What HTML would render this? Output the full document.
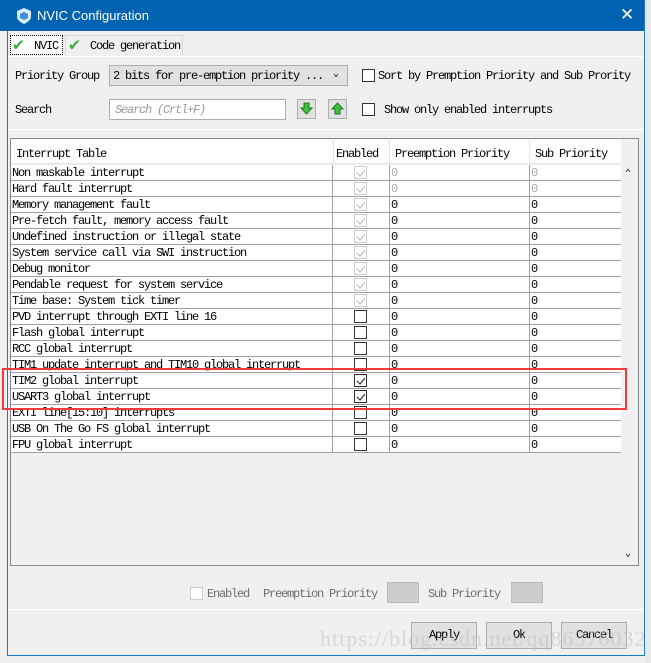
<!DOCTYPE html>
<html><head><meta charset="utf-8"><style>
*{margin:0;padding:0;box-sizing:border-box}
body{width:651px;height:663px;background:#f0f0f0;position:relative;overflow:hidden;font-family:"Liberation Mono",monospace;font-size:12px;letter-spacing:-1.2px;color:#000}
.a{position:absolute}
.win{left:7px;top:0;width:638px;height:656px;border:1px solid #1979ca;background:#f0f0f0}
.title{left:0;top:0;width:644px;height:31px;background:#0063b1;color:#fff;font-family:"Liberation Sans",sans-serif;font-size:13px;letter-spacing:0}
.cb{width:13px;height:13px;border:1px solid #333;background:#fff}
.row{left:11px;width:610px;height:16px;border-bottom:1px solid #a0a0a0;background:#fff}
.row span{position:absolute;top:1px;line-height:14px}
.vl{width:1px;background:#a0a0a0}
.btn{height:27px;border:1px solid #adadad;background:#e1e1e1;text-align:center;line-height:25px}
</style></head><body>
<div class="a" style="left:645px;top:0;width:6px;height:663px;background:#e8e8e8"></div>
<div class="a win"></div>
<div class="a title">
 <svg class="a" style="left:17px;top:8px" width="14" height="16" viewBox="0 0 14 16"><path d="M7 0L14 3V9C14 13 7 16 7 16C7 16 0 13 0 9V3Z" fill="#d8ecfa"/><path d="M7 4L11 6V10L7 12L3 10V6Z" fill="#3a8fd6"/></svg>
 <div class="a" style="left:37px;top:8px">NVIC Configuration</div>
 <div class="a" style="left:620px;top:5px;font-size:17px">✕</div>
</div>
<!-- tabs -->
<div class="a" style="left:10px;top:35px;width:53px;height:20px;border:1px dotted #000;background:#fff"></div>
<div class="a" style="left:13px;top:34px;color:#3cb043;font-size:18px;letter-spacing:0;font-weight:bold">✔</div>
<div class="a" style="left:34px;top:39px">NVIC</div>
<div class="a" style="left:65px;top:35px;width:118px;height:20px;border:1px solid #d9d9d9;border-bottom:none;background:#f0f0f0"></div>
<div class="a" style="left:69px;top:34px;color:#3cb043;font-size:18px;letter-spacing:0;font-weight:bold">✔</div>
<div class="a" style="left:90px;top:39px">Code generation</div>
<div class="a" style="left:8px;top:56px;width:636px;height:1px;background:#fff"></div>
<!-- controls -->
<div class="a" style="left:15px;top:69px">Priority Group</div>
<div class="a" style="left:109px;top:65px;width:239px;height:21px;border:1px solid #adadad;background:#e1e1e1"></div>
<div class="a" style="left:113px;top:69px">2 bits for pre-emption priority ...</div>
<div class="a" style="left:333px;top:68px;font-size:10px">&#8964;</div>
<div class="a cb" style="left:362px;top:69px"></div>
<div class="a" style="left:378px;top:69px">Sort by Premption Priority and Sub Prority</div>
<div class="a" style="left:15px;top:103px">Search</div>
<div class="a" style="left:109px;top:99px;width:177px;height:21px;border:1px solid #adadad;background:#fff"></div>
<div class="a" style="left:115px;top:103px;color:#999;font-style:italic">Search (Crtl+F)</div>
<div class="a" style="left:297px;top:99px;width:19px;height:20px;border:1px solid #adadad;background:#e1e1e1"></div>
<svg class="a" style="left:300px;top:102px" width="13" height="13"><path d="M4 1H9V6H12L6.5 12L1 6H4Z" fill="#3ec23e" stroke="#1a7a1a"/></svg>
<div class="a" style="left:328px;top:99px;width:19px;height:20px;border:1px solid #adadad;background:#e1e1e1"></div>
<svg class="a" style="left:331px;top:102px" width="13" height="13"><path d="M4 12H9V7H12L6.5 1L1 7H4Z" fill="#3ec23e" stroke="#1a7a1a"/></svg>
<div class="a cb" style="left:362px;top:103px"></div>
<div class="a" style="left:384px;top:103px">Show only enabled interrupts</div>
<!-- panel -->
<div class="a" style="left:8px;top:129px;width:636px;height:1px;background:#fff"></div>
<div class="a" style="left:10px;top:138px;width:629px;height:428px;border:1px solid #828790;background:#f0f0f0"></div>
<div class="a" style="left:11px;top:139px;width:610px;height:25px;background:#fff;border-bottom:1px solid #e5e5e5"></div>
<div class="a" style="left:16px;top:147px">Interrupt Table</div>
<div class="a" style="left:336px;top:147px">Enabled</div>
<div class="a" style="left:395px;top:147px">Preemption Priority</div>
<div class="a" style="left:535px;top:147px">Sub Priority</div>
<div class="a" style="left:621px;top:164px;width:17px;height:401px;background:#f0f0f0"></div>
<div class="a" style="left:625px;top:168px;font-size:10px">&#8963;</div>
<div class="a" style="left:625px;top:548px;font-size:10px">&#8964;</div>
<div id="rows"></div>
<!-- bottom controls -->
<div class="a" style="left:8px;top:609px;width:636px;height:1px;background:#fff"></div>
<div class="a" style="left:190px;top:587px;width:13px;height:13px;border:1px solid #ccc;background:#fff"></div>
<div class="a" style="left:207px;top:587px;color:#6d6d6d">Enabled</div>
<div class="a" style="left:263px;top:587px;color:#6d6d6d">Preemption Priority</div>
<div class="a" style="left:387px;top:582px;width:32px;height:21px;border:1px solid #bcbcbc;background:#ccc"></div>
<div class="a" style="left:428px;top:587px;color:#6d6d6d">Sub Priority</div>
<div class="a" style="left:511px;top:582px;width:32px;height:21px;border:1px solid #bcbcbc;background:#ccc"></div>
<div class="a btn" style="left:411px;top:622px;width:66px">Apply</div>
<div class="a btn" style="left:486px;top:622px;width:66px">Ok</div>
<div class="a btn" style="left:561px;top:622px;width:66px">Cancel</div>
<div class="a" style="left:320px;top:626px;font-size:22px;letter-spacing:1px;color:rgba(190,190,190,.5);font-family:'Liberation Serif',serif">https://blog.csdn.net/qq86376032</div>
<div class="a" style="left:2px;top:368px;width:625px;height:42px;border:2px solid #f03c3c"></div>
<script>
var r=["Non maskable interrupt","Hard fault interrupt","Memory management fault","Pre-fetch fault, memory access fault","Undefined instruction or illegal state","System service call via SWI instruction","Debug monitor","Pendable request for system service","Time base: System tick timer","PVD interrupt through EXTI line 16","Flash global interrupt","RCC global interrupt","TIM1 update interrupt and TIM10 global interrupt","TIM2 global interrupt","USART3 global interrupt","EXTI line[15:10] interrupts","USB On The Go FS global interrupt","FPU global interrupt"];
var h="";
r.forEach(function(t,i){var y=165+16*i;var g=i<9,c=g||i==13||i==14;
h+='<div class="a row" style="top:'+y+'px"><span style="left:1px">'+t+'</span><span style="left:380px;color:'+(i<2?'#aaa':'#000')+'">0</span><span style="left:520px;color:'+(i<2?'#aaa':'#000')+'">0</span>'+
'<div class="a" style="left:343px;top:1px;width:13px;height:13px;border:1px solid '+(g?'#ccc':'#333')+';background:#fff"></div>'+
(c?'<svg class="a" style="left:345px;top:3px" width="10" height="10"><path d="M1 5L4 8L9 2" fill="none" stroke="'+(g?'#bbb':'#333')+'" stroke-width="1.2"/></svg>':'')+
'<div class="a vl" style="left:321px;top:0;height:16px"></div><div class="a vl" style="left:378px;top:0;height:16px"></div><div class="a vl" style="left:518px;top:0;height:16px"></div></div>';});
h+='<div class="a vl" style="left:333px;top:139px;height:25px;background:#e5e5e5"></div><div class="a vl" style="left:389px;top:139px;height:25px;background:#e5e5e5"></div><div class="a vl" style="left:529px;top:139px;height:25px;background:#e5e5e5"></div>';
document.getElementById("rows").innerHTML=h;
</script>
</body></html>
